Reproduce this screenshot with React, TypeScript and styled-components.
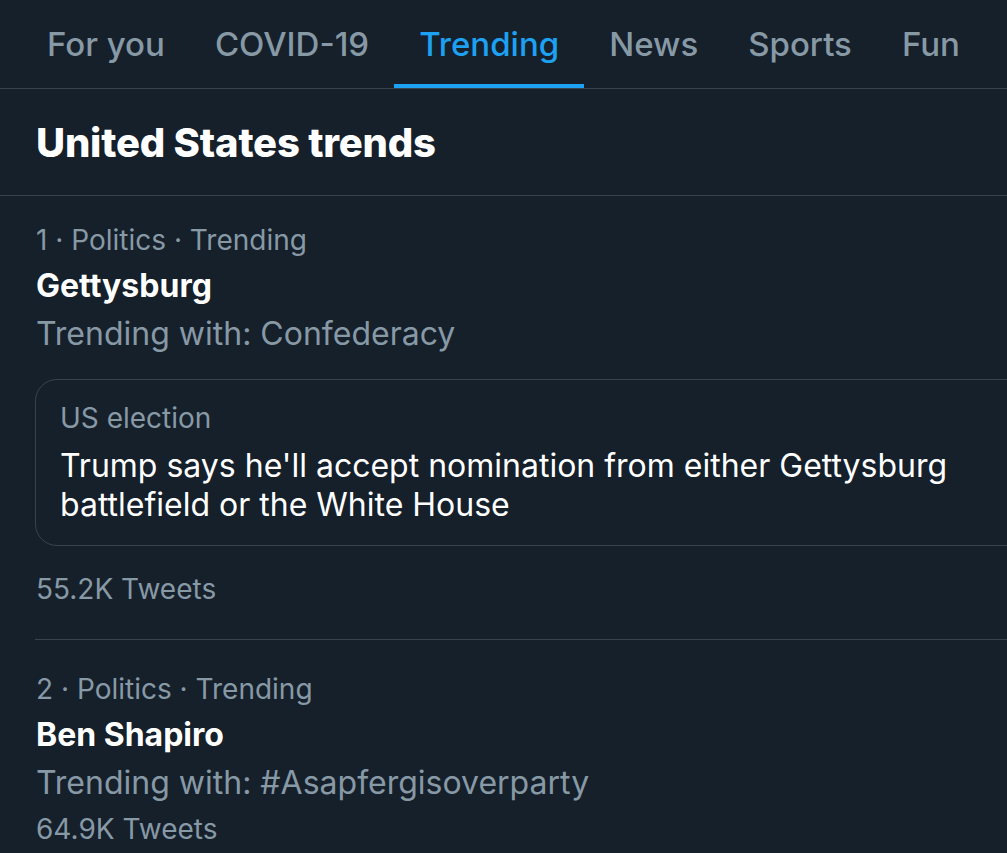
import React from "react";
import styled, { createGlobalStyle, css } from "styled-components";

const Global = createGlobalStyle`
  html, body { margin: 0; padding: 0; background: #15202b; }
  body { font-family: Inter, "Noto Sans", sans-serif; -webkit-font-smoothing: antialiased; }
  #root { min-height: 100vh; background: #15202b; overflow: hidden; }
`;

const GRAY = "#8899a6";
const BORDER = "#38444d";
const BLUE = "#1da1f2";

const Page = styled.div`
  width: 1007px;
  min-height: 853px;
  overflow: hidden;
  background: #15202b;
  color: #ffffff;
`;

const TabBar = styled.nav`
  display: flex;
  height: 88px;
  padding-left: 22px;
  border-bottom: 1px solid ${BORDER};
  white-space: nowrap;
  overflow: hidden;
`;

const Tab = styled.div<{ $active?: boolean }>`
  position: relative;
  display: flex;
  align-items: center;
  padding: 0 25px;
  font-size: 33px;
  font-weight: 500;
  color: ${GRAY};
  ${(p) =>
    p.$active &&
    css`
      color: ${BLUE};
      &::after {
        content: "";
        position: absolute;
        left: 0;
        right: 0;
        bottom: 0;
        height: 4px;
        background: ${BLUE};
      }
    `}
`;

const Header = styled.h2`
  margin: 0;
  height: 106px;
  display: flex;
  align-items: center;
  padding-left: 36px;
  font-size: 40px;
  font-weight: 800;
  letter-spacing: -0.2px;
  border-bottom: 1px solid ${BORDER};
`;

const List = styled.div`
  padding-left: 35px;
`;

const Item = styled.div`
  padding: 27px 0 28px 1px;
  border-bottom: 1px solid ${BORDER};
  &:first-child {
    padding-top: 22px;
  }
  &:last-child {
    border-bottom: none;
  }
`;

const Meta = styled.div`
  font-size: 28px;
  line-height: 44px;
  color: ${GRAY};
`;

const Title = styled.div`
  font-size: 32px;
  line-height: 48px;
  font-weight: 700;
  color: #ffffff;
`;

const With = styled.div`
  font-size: 32px;
  line-height: 48px;
  color: ${GRAY};
`;

const Card = styled.div`
  margin: 21px -40px 21px -1px;
  padding: 18px 24px 21px 24px;
  border: 1px solid ${BORDER};
  border-radius: 22px;
`;

const CardLabel = styled.div`
  font-size: 28px;
  line-height: 40px;
  color: ${GRAY};
`;

const CardText = styled.div`
  margin-top: 8px;
  font-size: 32px;
  line-height: 39px;
  color: #ffffff;
  max-width: 920px;
`;

const Count = styled.div`
  font-size: 28px;
  line-height: 44px;
  color: ${GRAY};
`;

const tabs = ["For you", "COVID-19", "Trending", "News", "Sports", "Fun"];

export default function App() {
  return (
    <Page>
      <Global />
      <TabBar>
        {tabs.map((t) => (
          <Tab key={t} $active={t === "Trending"}>
            {t}
          </Tab>
        ))}
      </TabBar>
      <Header>United States trends</Header>
      <List>
        <Item>
          <Meta>1 · Politics · Trending</Meta>
          <Title>Gettysburg</Title>
          <With>Trending with: Confederacy</With>
          <Card>
            <CardLabel>US election</CardLabel>
            <CardText>
              Trump says he'll accept nomination from either Gettysburg battlefield or the White House
            </CardText>
          </Card>
          <Count>55.2K Tweets</Count>
        </Item>
        <Item>
          <Meta>2 · Politics · Trending</Meta>
          <Title>Ben Shapiro</Title>
          <With>Trending with: #Asapfergisoverparty</With>
          <Count>64.9K Tweets</Count>
        </Item>
      </List>
    </Page>
  );
}
